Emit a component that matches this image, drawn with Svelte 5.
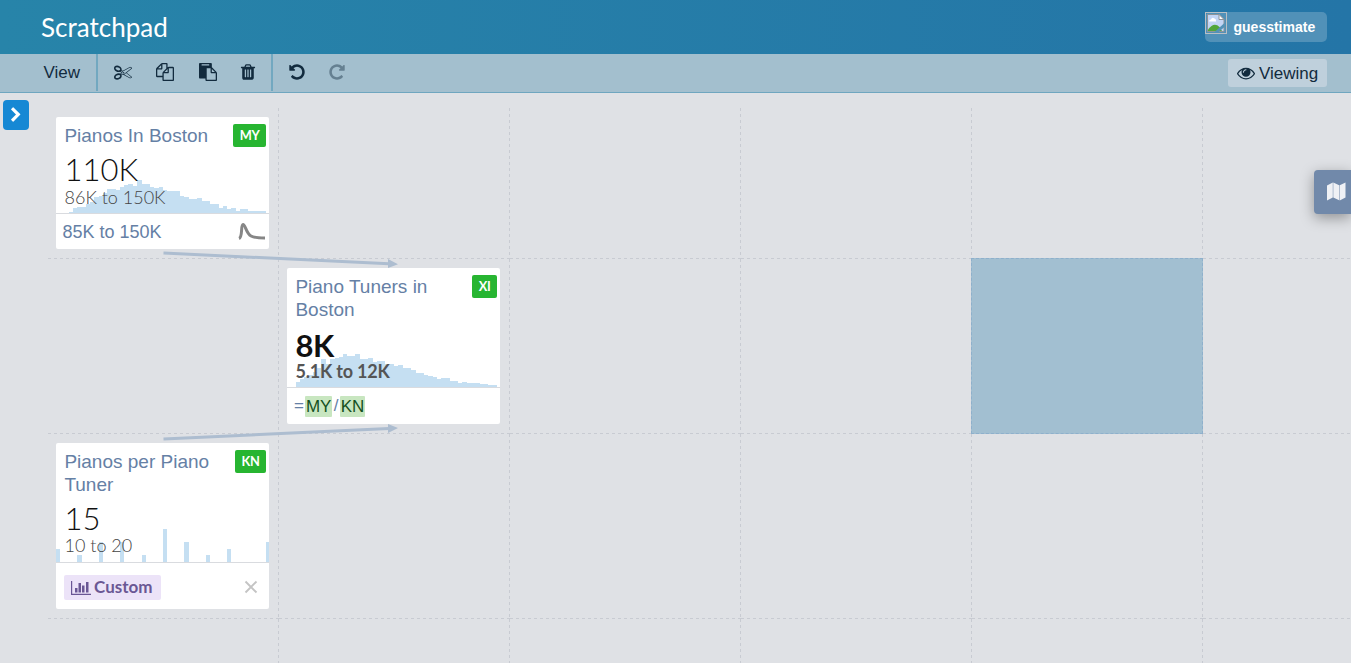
<script>
  const icons = {
    cut: 'M960 896q26 0 45 19t19 45-19 45-45 19-45-19-19-45 19-45 45-19zm300 64l507 398q28 20 25 56-5 35-35 51l-128 64q-13 7-29 7-17 0-31-8l-690-387-110 66q-8 4-12 5 14 49 10 97-7 77-56 147.500t-132 123.500q-132 84-277 84-136 0-222-78-90-84-79-207 7-76 56-147t131-124q132-84 278-84 83 0 151 31 9-13 22-22l122-73-122-73q-13-9-22-22-68 31-151 31-146 0-278-84-82-53-131-124t-56-147q-5-59 15.500-113t63.500-93q85-79 222-79 145 0 277 84 83 52 132 123t56 148q4 48-10 97 4 1 12 5l110 66 690-387q14-8 31-8 16 0 29 7l128 64q30 16 35 51 3 36-25 56zm-681-260q46-42 21-108t-106-117q-92-59-192-59-74 0-113 36-46 42-21 108t106 117q92 59 192 59 74 0 113-36zm-85 745q81-51 106-117t-21-108q-39-36-113-36-100 0-192 59-81 51-106 117t21 108q39 36 113 36 100 0 192-59zm178-613l96 58v-11q0-36 33-56l14-8-79-47-26 26q-3 3-10 11t-12 12q-2 2-4 3.500t-3 2.500zm224 224l96 32 736-576-128-64-768 431v113l-160 96 9 8q2 2 7 6 4 4 11 12t11 12l26 26zm704 416l128-64-520-408-177 138q-2 3-13 7z',
    copy: 'M1696 384q40 0 68 28t28 68v1216q0 40-28 68t-68 28h-960q-40 0-68-28t-28-68v-288h-544q-40 0-68-28t-28-68v-672q0-40 20-88t48-76l408-408q28-28 76-48t88-20h416q40 0 68 28t28 68v328q68-40 128-40h416zm-544 213l-299 299h299v-299zm-640-384l-299 299h299v-299zm196 647l316-316v-416h-384v416q0 40-28 68t-68 28h-416v640h512v-256q0-40 20-88t48-76zm956 804v-1152h-384v416q0 40-28 68t-68 28h-416v640h896z',
    paste: 'M768 1664h896v-640h-416q-40 0-68-28t-28-68v-416h-384v1152zm256-1440v-64q0-13-9.500-22.500t-22.500-9.500h-704q-13 0-22.500 9.500t-9.500 22.500v64q0 13 9.500 22.500t22.500 9.500h704q13 0 22.500-9.500t9.500-22.500zm256 672h299l-299-299v299zm512 128v672q0 40-28 68t-68 28h-960q-40 0-68-28t-28-68v-160h-544q-40 0-68-28t-28-68v-1344q0-40 28-68t68-28h1088q40 0 68 28t28 68v328q21 13 36 28l408 408q28 28 48 76t20 88z',
    trash: 'M704 1376v-704q0-14-9-23t-23-9h-64q-14 0-23 9t-9 23v704q0 14 9 23t23 9h64q14 0 23-9t9-23zm256 0v-704q0-14-9-23t-23-9h-64q-14 0-23 9t-9 23v704q0 14 9 23t23 9h64q14 0 23-9t9-23zm256 0v-704q0-14-9-23t-23-9h-64q-14 0-23 9t-9 23v704q0 14 9 23t23 9h64q14 0 23-9t9-23zm-544-992h448l-48-117q-7-9-17-11h-317q-10 2-17 11zm928 32v64q0 14-9 23t-23 9h-96v948q0 83-47 143.500t-113 60.500h-832q-66 0-113-58.500t-47-141.500v-952h-96q-14 0-23-9t-9-23v-64q0-14 9-23t23-9h309l70-167q15-37 54-63t79-26h320q40 0 79 26t54 63l70 167h309q14 0 23 9t9 23z',
    undo: 'M1664 896q0 156-61 298t-164 245-245 164-298 61q-172 0-327-72.500t-264-204.500q-7-10-6.500-22.500t8.500-20.500l137-138q10-9 25-9 16 2 23 12 73 95 179 147t225 52q104 0 198.500-40.500t163.500-109.500 109.500-163.500 40.500-198.500-40.500-198.500-109.500-163.500-163.500-109.500-198.500-40.500q-98 0-188 35.500t-160 101.500l137 138q31 30 14 69-17 40-59 40h-448q-26 0-45-19t-19-45v-448q0-42 40-59 39-17 69 14l130 129q107-101 244.500-156.500t284.500-55.500q156 0 298 61t245 164 164 245 61 298z',
    eye: 'M1664 960q-152-236-381-353 61 104 61 225 0 185-131.500 316.500t-316.500 131.500-316.500-131.500-131.500-316.500q0-121 61-225-229 117-381 353 133 205 333.500 326.500t434.500 121.500 434.500-121.500 333.500-326.500zm-720-384q0-20-14-34t-34-14q-125 0-214.500 89.500t-89.500 214.500q0 20 14 34t34 14 34-14 14-34q0-86 61-147t147-61q20 0 34-14t14-34zm848 384q0 34-20 69-140 230-376.500 368.500t-499.500 138.500-499.500-139-376.500-368q-20-35-20-69t20-69q140-229 376.500-368t499.500-139 499.500 139 376.500 368q20 35 20 69z',
    chevron: 'M1363 877l-742 742q-19 19-45 19t-45-19l-166-166q-19-19-19-45t19-45l531-531-531-531q-19-19-19-45t19-45l166-166q19-19 45-19t45 19l742 742q19 19 19 45t-19 45z'
  };

  // Histogram steps: [left edge, bar height]; each bar runs to the next left edge.
  const pianos = [[13,1],[17,5],[21.3,5.7],[25.7,6.3],[30,9],[34.3,11],[38.3,15.7],[42.7,17],[46.7,19.7],[51,24],[59.7,23],[64,26],[68.3,27.7],[72.3,29],[76.7,27],[81,33],[85.7,29],[94,26],[98.3,25],[102.7,25.7],[107,23],[111.3,22],[124,17],[128.3,16],[132.7,14],[141,15],[145.7,12],[154,9],[162.7,5],[167,7],[171,4],[175.3,5],[179.7,2],[184,4],[192.3,2],[210,0]];
  const tuners = [[9,5],[13,8],[17.3,10],[21.5,12],[26,15],[30,19],[34,28],[38.7,23],[43,28],[47.7,29],[51.7,30],[56,32.6],[60.3,31],[68,33],[73,28.5],[81,29],[86,25],[90,26],[98,23],[107,21],[111.3,22],[116,19],[124,17],[128.5,14],[137,12],[141,11.5],[145.5,10],[149.5,8],[154,9],[162.5,6],[171,4],[175.3,5],[179.7,4],[192.5,3],[201,2],[210,0]];
  const perTuner = [[0,13],[4,0],[21,7],[26,0],[43,20],[47,0],[64,20],[68,0],[86,7],[90,0],[107,33],[111,0],[128,20],[133,0],[150,7],[154,0],[171,13],[175,0],[210,20],[213,0]];
  const area = (steps) =>
    `M${steps[0][0]} 34` +
    steps.map(([x, h], i) => `V${34 - h}H${steps[i + 1] ? steps[i + 1][0] : x}`).join('') + 'V34Z';

  const cards = {
    '0-0': { title: 'Pianos In Boston', id: 'MY', value: '110K', range: '86K to 150K', steps: pianos, kind: 'range' },
    '1-1': { title: 'Piano Tuners in Boston', id: 'XI', value: '8K', range: '5.1K to 12K', steps: tuners, kind: 'formula', output: true },
    '2-0': { title: 'Pianos per Piano Tuner', id: 'KN', value: '15', range: '10 to 20', steps: perTuner, kind: 'custom' }
  };
  const rows = [0, 1, 2, 3];
  const cols = [0, 1, 2, 3, 4, 5];
</script>

{#snippet icon(name, size)}
  <svg class="icon" width={size} height={size} viewBox="0 0 1792 1792"><path d={icons[name]} /></svg>
{/snippet}

<div class="app">
  <header>
    <h1>Scratchpad</h1>
    <div class="user">
      <svg class="avatar" width="22" height="22" viewBox="0 0 22 22">
        <rect x=".5" y=".5" width="21" height="21" fill="none" stroke="#b9bfc4" />
        <path d="M2.500 2.500H14L19 7.500V19.500H2.500Z" fill="#c3d5f5" stroke="#8e9499" />
        <path d="M3 19V17.500Q9 9.500 14.500 15L17 19Z" fill="#52a63b" />
        <path d="M4 9.500Q4 7.500 6 7.500Q7 4.500 9.500 6.500Q11.500 7 11 9.500Z" fill="#fff" />
        <path d="M14 2.500V7.500H19Z" fill="#fff" stroke="#8e9499" />
        <path d="M19.500 11L9.500 20H13.500L19.500 15Z" fill="#5392b8" />
      </svg>
      <span>guesstimate</span>
    </div>
  </header>

  <nav>
    <div class="group view">View</div>
    <div class="group edit">
      {@render icon('cut', 18)}{@render icon('copy', 18)}{@render icon('paste', 18)}{@render icon('trash', 18)}
    </div>
    <div class="group history">
      {@render icon('undo', 18)}
      <span class="redo">{@render icon('undo', 18)}</span>
    </div>
    <div class="viewing">{@render icon('eye', 18)}<span>Viewing</span></div>
  </nav>

  <main>
    <div class="grid">
      {#each rows as r}
        {#each cols as c}
          {@const card = cards[`${r}-${c}`]}
          <div class="cell">
            {#if r === 1 && c === 4}<div class="selected"></div>{/if}
            {#if card}
              <article class:output={card.output}>
                <div class="head">
                  <h2>{card.title}</h2>
                  <span class="badge">{card.id}</span>
                </div>
                <div class="stats {card.kind}-stats">
                  <svg class="hist" width="213" height="34" shape-rendering="crispEdges"><path d={area(card.steps)} /></svg>
                  <div class="value">{card.value}</div>
                  <div class="spread">{card.range}</div>
                </div>
                <div class="input {card.kind}">
                  {#if card.kind === 'range'}
                    <span>85K to 150K</span>
                    <svg width="28" height="20" viewBox="0 0 28 20"><path d="M1 16.500C5 15 2.500 2.500 5 2.500C7.500 2.500 8 11.500 13 14C17 16 21 16 27 16" fill="none" stroke="#868686" stroke-width="3" /></svg>
                  {:else if card.kind === 'formula'}
                    <span class="equals">=</span><mark>MY</mark><span class="slash">/</span><mark>KN</mark>
                  {:else}
                    <span class="chip">
                      <svg width="20" height="16" viewBox="0 0 20 16"><path d="M0 1H1.200V13.700H20V15H0ZM4 8H6.500V12.500H4ZM7.500 3H10V12.500H7.500ZM11 5.500H13.500V12.500H11ZM15 2H17.500V12.500H15Z" /></svg>
                      <span>Custom</span>
                    </span>
                    <svg class="close" width="14" height="14" viewBox="0 0 14 14"><path d="M1.500 1.500L12.500 12.500M12.500 1.500L1.500 12.500" stroke="#c4c4c4" stroke-width="1.900" /></svg>
                  {/if}
                </div>
              </article>
            {/if}
          </div>
        {/each}
      {/each}
    </div>
    <svg class="arrows" width="1351" height="570" viewBox="0 93 1351 570">
      <g stroke="#adbdd0" stroke-width="3" fill="#adbdd0">
        <path d="M163.500 253L389 263.700M163.500 439L389 428.500" />
        <path d="M388 259L398 264.200L388 268ZM388 424L398 428L388 433Z" stroke="none" />
      </g>
    </svg>
    <button class="expand" aria-label="Expand">{@render icon('chevron', 16)}</button>
    <button class="map" aria-label="Map">
      <svg width="19" height="19" viewBox="0 0 19 19"><path d="M0 3.500L5.800 .5V15.500L0 18.500ZM6.300 .5L12.200 3.300V18.300L6.300 15.500ZM12.700 3.300L18.500 .5V15.500L12.700 18.500Z" fill="#eff1f5" /></svg>
    </button>
  </main>
</div>

<style>
  :global(body) { overflow: hidden; }
  .app { height: 663px; display: flex; flex-direction: column; background: #dfe1e5; font-family: "Liberation Sans", Arial, sans-serif; overflow: hidden; }
  h1, h2 { margin: 0; font-weight: 400; }
  .icon { fill: currentColor; display: block; flex: none; }
  header { height: 54px; flex: none; display: flex; justify-content: space-between; align-items: center; padding: 0 24px 0 41px; background: linear-gradient(90deg, #2784a9, #2475a7); color: #fff; }
  h1 { font: 400 27.500px/54px Lato, sans-serif; transform: scaleX(.947); transform-origin: 0 50%; }
  .user { width: 122px; height: 30px; display: flex; border-radius: 5px; background: #5191b8; font-weight: 700; font-size: 14px; line-height: 30px; }
  .user span { margin-left: 6.500px; }
  nav { height: 39px; box-sizing: border-box; border-bottom: 1px solid #6fa6bf; background: #a3bfce; flex: none; display: flex; align-items: flex-start; color: #122b3e; font-size: 17px; }
  .group { height: 37px; display: flex; align-items: center; box-sizing: border-box; }
  .group .icon { position: relative; top: -.5px; }
  .view { width: 98px; padding-left: 43.500px; border-right: 2px solid #72a8c0; }
  .edit { width: 175px; padding-left: 16px; gap: 24px; border-right: 2px solid #72a8c0; }
  .edit .icon:nth-child(3) { left: .5px; }
  .edit .icon:nth-child(4) { margin-left: -1px; }
  .history { padding-left: 14.500px; gap: 22px; }
  .redo { opacity: .42; transform: scaleX(-1); }
  .viewing { margin: 5px 24px 0 auto; width: 99px; height: 28px; box-sizing: border-box; padding: 1px 0 0 9px; display: flex; gap: 4px; align-items: center; background: #bfd0dc; border-radius: 3px; }
  .viewing .icon { margin-bottom: 2px; }
  main { flex: 1; position: relative; min-height: 0; overflow: hidden; }
  .grid { display: grid; grid-template-columns: repeat(6, 231px); grid-template-rows: 151px 175px 185px 185px; padding: 15px 0 0 48px; }
  .cell { position: relative; padding: 9px 0 0 8px; background: repeating-linear-gradient(180deg, #c8cbd2 0 3px, transparent 3px 6px) right top / 1px 100% no-repeat, repeating-linear-gradient(90deg, #c8cbd2 0 3px, transparent 3px 6px) left bottom / 100% 1px no-repeat; }
  .selected { position: absolute; inset: -1px 0 0 -1px; background: #a2bfd1; border: 1px dashed #8eb0cc; }
  article { position: relative; z-index: 2; width: 213px; background: #fff; border-radius: 2px; }
  .head { display: flex; justify-content: space-between; align-items: flex-start; padding: 7px 3px 0 8.400px; }
  h2 { font-size: 19px; line-height: 23px; color: #6580a5; max-width: 155px; }
  .output h2 { max-width: 150px; }
  .badge { background: #27b531; color: #fff; font: 700 12.800px/23px Lato, sans-serif; height: 23px; padding: 0 6.200px; border-radius: 2px; letter-spacing: -.1px; }
  .stats { position: relative; height: 66px; padding-left: 8.500px; border-bottom: 1px solid #d9dbdf; font-family: Lato, sans-serif; }
  .hist { position: absolute; left: 0; bottom: 0; fill: #c5dff2; }
  .value { position: relative; font-weight: 300; font-size: 31px; line-height: 36px; padding-top: 4px; color: #111; }
  .spread { position: relative; font-weight: 300; font-size: 18px; line-height: 18px; padding-top: 1px; color: #444; }
  .custom-stats .spread { padding-top: 0; }
  .output .value { font-weight: 700; padding-top: 7px; line-height: 35px; letter-spacing: -.4px; }
  .output .spread { font-weight: 700; letter-spacing: -.2px; margin-top: -1px; padding-top: 0; color: #555; }
  .input { display: flex; align-items: center; height: 35px; padding: 0 3px 0 6.500px; color: #6580a5; font-size: 18px; justify-content: space-between; }
  .range span { position: relative; top: 1px; }
  .formula { height: 36px; padding-left: 7px; justify-content: flex-start; font-size: 17px; }
  mark { background: #c8e6c0; color: #14501e; line-height: 21px; padding: 0 1px; border-radius: 1px; }
  .equals { margin-right: 1px; }
  .slash { padding: 0 1.300px; }
  .custom { height: 46px; padding: 1px 11px 0 8px; box-sizing: border-box; }
  .custom .chip { margin-top: 2px; }
  .chip { display: flex; gap: 3px; align-items: center; height: 25px; width: 97px; box-sizing: border-box; padding: 0 0 0 7px; border-radius: 2px; background: #ece3f8; color: #6a5794; font: 700 17px Lato, sans-serif; }
  .chip span { margin-bottom: 2px; }
  .chip svg { fill: #6a5794; }
  .arrows { position: absolute; left: 0; top: 0; z-index: 1; }
  button { border: 0; padding: 0; display: flex; align-items: center; justify-content: center; color: #fff; }
  .expand { position: absolute; z-index: 3; left: 3px; top: 7px; width: 26px; height: 30px; border-radius: 4px; background: #1688d4; }
  .map { position: absolute; z-index: 3; right: 0; top: 77px; width: 37px; height: 44px; padding: 0 0 2px 7px; border-radius: 4px 0 0 4px; background: #7189aa; box-shadow: 0 4px 14px rgba(0, 0, 0, .35); }
</style>
